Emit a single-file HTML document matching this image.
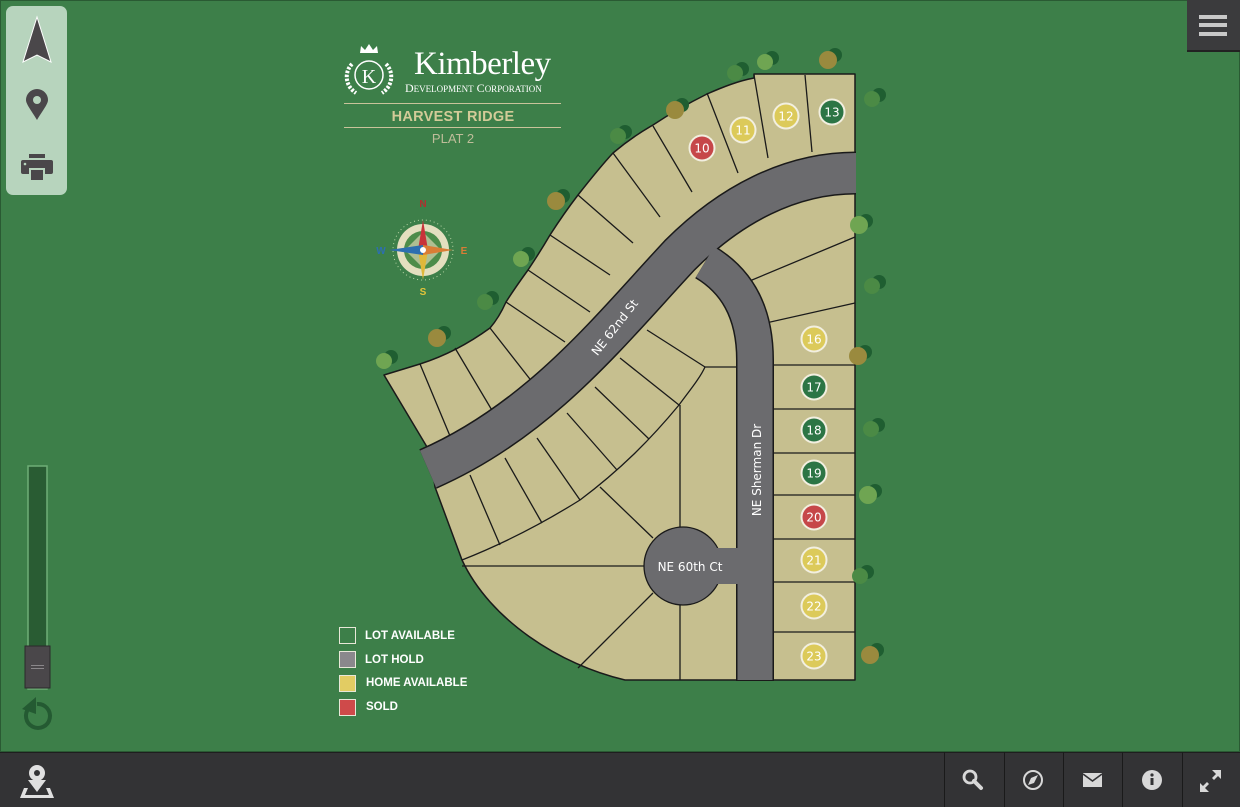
<!DOCTYPE html>
<html><head><meta charset="utf-8">
<style>
html,body{margin:0;padding:0;width:1240px;height:807px;overflow:hidden;background:#3d7f49;font-family:"Liberation Sans",sans-serif}
svg{display:block}
</style></head><body>
<svg width="1240" height="807" viewBox="0 0 1240 807" xmlns="http://www.w3.org/2000/svg" font-family="Liberation Sans, sans-serif">
<rect x="0" y="0" width="1240" height="752" fill="#3d7f49"/>
<rect x="0.5" y="0.5" width="1239" height="751" fill="none" stroke="#2a5a33"/>

<!-- parcels -->
<path d="M384 375 L420 364 C445 356 468 344 490 328 C497 320 502 311 506 302 C513 291 520 281 528 270 C536 258 543 247 550 235 C559 221 568 208 578 195 C589 181 600 167 613 153 C626 142 639 133 653 125 C671 113 689 103 707 94 C723 87 738 81 754 78 L754 74 L855 74 L855 680 L625 680 C560 665 490 620 462 560 L435 487 L430 452 Z" fill="#c6bf8f" stroke="#1a1a1a" stroke-width="1.5" stroke-linejoin="round"/>

<!-- lot lines -->
<g stroke="#1a1a1a" stroke-width="1.3" fill="none">
<path d="M805 75 L812 152"/><path d="M754 75 L768 158"/><path d="M707 93 L738 173"/>
<path d="M653 126 L692 192"/><path d="M613 153 L660 217"/><path d="M578 195 L633 243"/>
<path d="M550 235 L610 275"/><path d="M528 270 L590 312"/><path d="M506 302 L565 342"/>
<path d="M490 328 L533 383"/><path d="M455 348 L493 412"/><path d="M420 364 L450 436"/>
<path d="M462 560 C500 545 540 525 580 500 C620 470 650 440 679 405 C690 390 700 378 705 367 L737 367"/>
<path d="M470 475 L500 545"/><path d="M505 458 L542 523"/><path d="M537 438 L580 500"/>
<path d="M567 413 L617 470"/><path d="M595 387 L649 439"/><path d="M620 358 L679 405"/>
<path d="M647 330 L705 367"/>
<path d="M462 566 L645 566"/><path d="M600 487 L653 538"/><path d="M680 405 L680 528"/>
<path d="M653 593 L578 668"/><path d="M680 603 L680 680"/>
<path d="M740 285 L855 237"/><path d="M757 325 L855 303"/>
<path d="M773 365 L855 365"/><path d="M773 409 L855 409"/><path d="M773 453 L855 453"/>
<path d="M773 495 L855 495"/><path d="M773 539 L855 539"/><path d="M773 582 L855 582"/><path d="M773 632 L855 632"/>
</g>

<!-- roads -->
<g fill="none" stroke-linecap="butt">
<path d="M428 469 C540 420 610 330 680 255 C730 205 790 173 856 173" stroke="#1a1a1a" stroke-width="43"/>
<path d="M755 681 L755 360 C755 310 735 280 705 262" stroke="#1a1a1a" stroke-width="38"/>
<path d="M428 469 C540 420 610 330 680 255 C730 205 790 173 856 173" stroke="#6b6b6e" stroke-width="40"/>
<path d="M755 680 L755 360 C755 310 735 280 705 262" stroke="#6b6b6e" stroke-width="35"/>
</g>
<circle cx="683" cy="566" r="39" fill="#6b6b6e" stroke="#1a1a1a" stroke-width="1.3"/>
<rect x="700" y="548" width="50" height="36" fill="#6b6b6e"/>
<text x="0" y="0" transform="translate(618 330) rotate(-52)" font-size="12" fill="#fff" text-anchor="middle" font-family="DejaVu Sans, sans-serif">NE 62nd St</text>
<text x="0" y="0" transform="translate(761 470) rotate(-90)" font-size="12" fill="#fff" text-anchor="middle" font-family="DejaVu Sans, sans-serif">NE Sherman Dr</text>
<text x="690" y="571" font-size="12" fill="#fff" text-anchor="middle" font-family="DejaVu Sans, sans-serif">NE 60th Ct</text>

<!-- lot numbers -->
<g font-size="12" fill="#fff" text-anchor="middle" font-family="DejaVu Sans, sans-serif" stroke-width="2">
<circle cx="702" cy="148" r="12.5" fill="#c64749" stroke="#f2efe0"/><text x="702" y="152.5">10</text>
<circle cx="743" cy="130" r="12.5" fill="#dcca5a" stroke="#f2efe0"/><text x="743" y="134.5">11</text>
<circle cx="786" cy="116" r="12.5" fill="#dcca5a" stroke="#f2efe0"/><text x="786" y="120.5">12</text>
<circle cx="832" cy="112" r="12.5" fill="#2c7545" stroke="#f2efe0"/><text x="832" y="116.5">13</text>
<circle cx="814" cy="339" r="12.5" fill="#dcca5a" stroke="#f2efe0"/><text x="814" y="343.5">16</text>
<circle cx="814" cy="387" r="12.5" fill="#2c7545" stroke="#f2efe0"/><text x="814" y="391.5">17</text>
<circle cx="814" cy="430" r="12.5" fill="#2c7545" stroke="#f2efe0"/><text x="814" y="434.5">18</text>
<circle cx="814" cy="473" r="12.5" fill="#2c7545" stroke="#f2efe0"/><text x="814" y="477.5">19</text>
<circle cx="814" cy="517" r="12.5" fill="#c64749" stroke="#f2efe0"/><text x="814" y="521.5">20</text>
<circle cx="814" cy="560" r="12.5" fill="#dcca5a" stroke="#f2efe0"/><text x="814" y="564.5">21</text>
<circle cx="814" cy="606" r="12.5" fill="#dcca5a" stroke="#f2efe0"/><text x="814" y="610.5">22</text>
<circle cx="814" cy="656" r="12.5" fill="#dcca5a" stroke="#f2efe0"/><text x="814" y="660.5">23</text>
</g>

<!-- trees -->
<g>
<g transform="translate(735 73)"><circle cx="7" cy="-4" r="7" fill="#1f5e31"/><circle cx="0" cy="0" r="8" fill="#4b8a45"/></g>
<g transform="translate(765 62)"><circle cx="7" cy="-4" r="7" fill="#1f5e31"/><circle cx="0" cy="0" r="8" fill="#6fa552"/></g>
<g transform="translate(828 60)"><circle cx="7" cy="-5" r="7" fill="#1f5e31"/><circle cx="0" cy="0" r="9" fill="#9a8a3e"/></g>
<g transform="translate(675 110)"><circle cx="7" cy="-5" r="7" fill="#1f5e31"/><circle cx="0" cy="0" r="9" fill="#9a8a3e"/></g>
<g transform="translate(618 136)"><circle cx="7" cy="-4" r="7" fill="#1f5e31"/><circle cx="0" cy="0" r="8" fill="#4b8a45"/></g>
<g transform="translate(556 201)"><circle cx="7" cy="-5" r="7" fill="#1f5e31"/><circle cx="0" cy="0" r="9" fill="#9a8a3e"/></g>
<g transform="translate(521 259)"><circle cx="7" cy="-5" r="7" fill="#1f5e31"/><circle cx="0" cy="0" r="8" fill="#6fa552"/></g>
<g transform="translate(485 302)"><circle cx="7" cy="-4" r="7" fill="#1f5e31"/><circle cx="0" cy="0" r="8" fill="#4b8a45"/></g>
<g transform="translate(437 338)"><circle cx="7" cy="-5" r="7" fill="#1f5e31"/><circle cx="0" cy="0" r="9" fill="#9a8a3e"/></g>
<g transform="translate(384 361)"><circle cx="7" cy="-4" r="7" fill="#1f5e31"/><circle cx="0" cy="0" r="8" fill="#6fa552"/></g>
<g transform="translate(872 99)"><circle cx="7" cy="-4" r="7" fill="#1f5e31"/><circle cx="0" cy="0" r="8" fill="#4b8a45"/></g>
<g transform="translate(859 225)"><circle cx="7" cy="-4" r="7" fill="#1f5e31"/><circle cx="0" cy="0" r="9" fill="#6fa552"/></g>
<g transform="translate(872 286)"><circle cx="7" cy="-4" r="7" fill="#1f5e31"/><circle cx="0" cy="0" r="8" fill="#4b8a45"/></g>
<g transform="translate(858 356)"><circle cx="7" cy="-4" r="7" fill="#1f5e31"/><circle cx="0" cy="0" r="9" fill="#9a8a3e"/></g>
<g transform="translate(871 429)"><circle cx="7" cy="-4" r="7" fill="#1f5e31"/><circle cx="0" cy="0" r="8" fill="#4b8a45"/></g>
<g transform="translate(868 495)"><circle cx="7" cy="-4" r="7" fill="#1f5e31"/><circle cx="0" cy="0" r="9" fill="#6fa552"/></g>
<g transform="translate(860 576)"><circle cx="7" cy="-4" r="7" fill="#1f5e31"/><circle cx="0" cy="0" r="8" fill="#4b8a45"/></g>
<g transform="translate(870 655)"><circle cx="7" cy="-5" r="7" fill="#1f5e31"/><circle cx="0" cy="0" r="9" fill="#9a8a3e"/></g>
</g>

<!-- compass -->
<g transform="translate(423 250)">
<circle r="30" fill="none" stroke="#b9d6a6" stroke-width="1" stroke-dasharray="1 3"/>
<circle r="26" fill="#e4dfbf"/>
<circle r="19" fill="#4d8c4a"/>
<path d="M0 -18 L18 0 L0 18 L-18 0 Z" fill="#d9d4b0" opacity=".7"/>
<path d="M0 -30 L5 0 L-5 0 Z" fill="#c8333a"/>
<path d="M0 30 L5 0 L-5 0 Z" fill="#e0b83a"/>
<path d="M-34 0 L0 -5 L0 5 Z" fill="#2d6fb0"/>
<path d="M30 0 L0 -5 L0 5 Z" fill="#d97d35"/>
<circle r="3" fill="#fff"/>
<text x="0" y="-43" font-size="10" font-weight="bold" fill="#b03030" text-anchor="middle">N</text>
<text x="0" y="45" font-size="10" font-weight="bold" fill="#e2c43a" text-anchor="middle">S</text>
<text x="-42" y="4" font-size="10" font-weight="bold" fill="#2d6fb0" text-anchor="middle">W</text>
<text x="41" y="4" font-size="10" font-weight="bold" fill="#d97d35" text-anchor="middle">E</text>
</g>

<!-- logo -->
<g fill="#fff">
<path d="M360 53 L361 46 L365 50 L369 44 L373 50 L377 46 L378 53 Z" fill="#fff"/>
<circle cx="369" cy="75" r="14" fill="none" stroke="#fff" stroke-width="1.5"/>
<path d="M352 64 C344 72 345 86 356 93 M386 64 C394 72 393 86 382 93" fill="none" stroke="#fff" stroke-width="4" stroke-dasharray="2.5 1.5"/>
<text x="369" y="83" font-size="20" text-anchor="middle" font-family="Liberation Serif, serif">K</text>
<text x="414" y="74" font-size="33" font-family="Liberation Serif, serif" letter-spacing="-0.5">Kimberley</text>
<text x="405" y="92" font-size="12" font-family="Liberation Serif, serif">D<tspan font-size="9">EVELOPMENT</tspan> C<tspan font-size="9">ORPORATION</tspan></text>
</g>
<rect x="344" y="103" width="217" height="1" fill="#c9c39a"/>
<rect x="344" y="127" width="217" height="1" fill="#c9c39a"/>
<text x="453" y="121" font-size="14.5" font-weight="bold" fill="#d3cb98" text-anchor="middle" letter-spacing=".3">HARVEST RIDGE</text>
<text x="453" y="143" font-size="13" fill="#bfbd9a" text-anchor="middle">PLAT 2</text>

<!-- legend -->
<g font-size="11.5" font-weight="bold" fill="#fff">
<rect x="339.5" y="627.5" width="16" height="16" fill="#3d7f49" stroke="#e8e8d8"/>
<text x="365" y="639">LOT AVAILABLE</text>
<rect x="339.5" y="651.5" width="16" height="16" fill="#8a888c" stroke="#e8e8d8"/>
<text x="365" y="663">LOT HOLD</text>
<rect x="339.5" y="675.5" width="16" height="16" fill="#e2cc63" stroke="#e8e8d8"/>
<text x="366" y="686">HOME AVAILABLE</text>
<rect x="339.5" y="699.5" width="16" height="16" fill="#cf4a4a" stroke="#e8e8d8"/>
<text x="366" y="710">SOLD</text>
</g>

<!-- left panel -->
<rect x="6" y="6" width="61" height="189" rx="7" fill="#b7d4bd"/>
<path d="M37 17 L51 62 L37 55 L23 62 Z" fill="#4a474a" stroke="#fff" stroke-width="1"/>
<path d="M37 120 C31 110 26 104 26 100 A11 11 0 0 1 48 100 C48 104 43 110 37 120 Z" fill="#4a474a"/>
<circle cx="37" cy="100" r="4" fill="#b7d4bd"/>
<rect x="29" y="154" width="16" height="4" fill="#4a474a"/>
<rect x="21" y="160" width="32" height="14" rx="2" fill="#4a474a"/>
<rect x="29" y="168" width="16" height="12" fill="#b7d4bd"/><rect x="31" y="170" width="12" height="10" fill="#4a474a"/>
<circle cx="25" cy="164" r="1.3" fill="#b7d4bd"/>

<!-- slider -->
<rect x="28" y="466" width="19" height="223" fill="#295c33" stroke="#6fae77" stroke-width="1.5"/>
<rect x="25" y="646" width="25" height="42" fill="#4a474a" stroke="#2b2a2b"/>
<rect x="31" y="665" width="13" height="1" fill="#8a878a"/><rect x="31" y="668" width="13" height="1" fill="#8a878a"/>
<path d="M29 708 A12 12 0 1 0 37 704" fill="none" stroke="#245a32" stroke-width="4"/>
<path d="M22 709 L36 697 L36 714 Z" fill="#245a32"/>

<!-- top right menu -->
<rect x="1187" y="0" width="53" height="50" fill="#3b3b3d"/>
<rect x="1187" y="50" width="53" height="2" fill="#222"/>
<rect x="1199" y="15" width="28" height="4" fill="#c8c8c8"/>
<rect x="1199" y="23" width="28" height="4" fill="#c8c8c8"/>
<rect x="1199" y="32" width="28" height="4" fill="#c8c8c8"/>

<!-- bottom bar -->
<rect x="0" y="752" width="1240" height="55" fill="#333335"/>
<rect x="0" y="752" width="1240" height="1" fill="#1e1e1e"/>
<g fill="#1a1a1a"><rect x="944" y="752" width="1" height="55"/><rect x="1004" y="752" width="1" height="55"/><rect x="1063" y="752" width="1" height="55"/><rect x="1122" y="752" width="1" height="55"/><rect x="1182" y="752" width="1" height="55"/></g>
<g fill="#e0e0e0">
<circle cx="37" cy="773" r="8"/><circle cx="37" cy="773" r="3" fill="#333335"/>
<path d="M28 780 L37 792 L46 780 Z"/>
<path d="M24 788 L20 798 L54 798 L50 788 L46 788 L49 795 L25 795 L28 788 Z"/>
</g>
<circle cx="970" cy="777" r="6" fill="none" stroke="#d8d8d8" stroke-width="2.8"/>
<path d="M974 781 L981 788" stroke="#d8d8d8" stroke-width="4" stroke-linecap="round"/>
<circle cx="1033" cy="780" r="9" fill="none" stroke="#d8d8d8" stroke-width="2"/>
<path d="M1038 775 L1034 783 L1028 785 L1031 778 Z" fill="#d8d8d8"/>
<rect x="1083" y="773" width="19" height="14" fill="#d8d8d8"/>
<path d="M1083 774 L1092.5 781 L1102 774" fill="none" stroke="#333335" stroke-width="1.6"/>
<circle cx="1152" cy="780" r="10" fill="#d8d8d8"/>
<circle cx="1152" cy="775" r="1.6" fill="#333335"/>
<rect x="1150.5" y="778" width="3" height="7" fill="#333335"/>
<g fill="#d8d8d8">
<path d="M1212 770 L1221 770 L1221 779 L1218 776 L1214 780 L1212 778 L1216 774 Z"/>
<path d="M1209 792 L1200 792 L1200 783 L1203 786 L1207 782 L1209 784 L1205 788 Z"/>
</g>
</svg>
</body></html>
